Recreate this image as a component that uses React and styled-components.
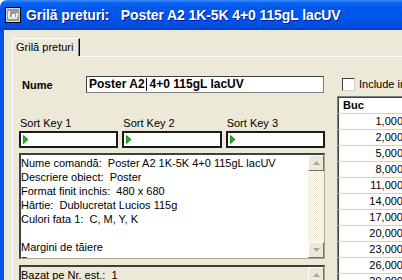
import React from "react";
import styled, { createGlobalStyle } from "styled-components";

const GlobalStyle = createGlobalStyle`
  html, body {
    margin: 0;
    padding: 0;
    background: #ffffff;
    overflow: hidden;
  }
  body {
    font-family: "Liberation Sans", Arial, sans-serif;
    font-size: 11px;
    color: #000;
  }
`;

const memoLines = [
  "Nume comandă:  Poster A2 1K-5K 4+0 115gL lacUV",
  "Descriere obiect:  Poster",
  "Format finit inchis:  480 x 680",
  "Hârtie:  Dublucretat Lucios 115g",
  "Culori fata 1:  C, M, Y, K",
  " ",
  "Margini de tăiere",
  "Presare:",
];

const quantities = [
  "1,000",
  "2,000",
  "5,000",
  "8,000",
  "11,000",
  "14,000",
  "17,000",
  "20,000",
  "23,000",
  "26,000",
  "29,000",
];

function AppIcon() {
  return (
    <svg width="16" height="16" viewBox="0 0 16 16">
      <rect x="0.5" y="0.5" width="15" height="15" fill="#d8d8d8" stroke="#000" />
      <rect x="2" y="2" width="12" height="12" fill="#9a9a9a" />
      <path d="M4 4v7h8" stroke="#fff" strokeWidth="1.6" fill="none" />
      <rect x="7" y="7" width="3" height="3" fill="#fff" />
      <rect x="11" y="6" width="2" height="4" fill="#e8e8e8" />
    </svg>
  );
}

function GreenArrow() {
  return (
    <svg width="6" height="9" viewBox="0 0 6 9">
      <path d="M0.5 0.5L5 4.5L0.5 8.5Z" fill="#16b516" stroke="#0a7a0a" strokeWidth="0.8" />
    </svg>
  );
}

function ScrollArrow({ down }) {
  return (
    <ArrowButton>
      <svg width="7" height="4" viewBox="0 0 7 4">
        <path d={down ? "M0 0H7L3.5 4Z" : "M0 4H7L3.5 0Z"} fill="#aca899" />
      </svg>
    </ArrowButton>
  );
}

export default function App() {
  return (
    <>
      <GlobalStyle />
      <Window>
        <TitleBar>
          <AppIcon />
          <TitleText>{"Grilă preturi:   Poster A2 1K-5K 4+0 115gL lacUV"}</TitleText>
        </TitleBar>
        <Frame>
          <TabStrip>
            <Tab>Grilă preturi</Tab>
            <TabFiller />
          </TabStrip>
          <Panel>
            <LeftColumn>
              <NameRow>
                <NameLabel>Nume</NameLabel>
                <NameInput>
                  Poster A2<Caret />4+0 115gL lacUV
                </NameInput>
              </NameRow>
              <SortKeys>
                {[1, 2, 3].map((n) => (
                  <SortKey key={n}>
                    <SortLabel>Sort Key {n}</SortLabel>
                    <SortBox>
                      <GreenArrow />
                    </SortBox>
                  </SortKey>
                ))}
              </SortKeys>
              <Memo>
                <MemoText>
                  {memoLines.map((line, i) => (
                    <div key={i}>{line}</div>
                  ))}
                </MemoText>
                <ScrollBar>
                  <ScrollArrow />
                  <Track />
                  <ScrollArrow down />
                </ScrollBar>
              </Memo>
              <Memo $readonly $height={40}>
                <MemoText>
                  <div>{"Bazat pe Nr. est.:  1"}</div>
                </MemoText>
                <ScrollBar>
                  <ScrollArrow />
                  <Track />
                </ScrollBar>
              </Memo>
            </LeftColumn>
            <RightColumn>
              <CheckRow>
                <CheckBox />
                <span>Include in calcul</span>
              </CheckRow>
              <Grid>
                <HeaderCell>Buc</HeaderCell>
                {quantities.map((q) => (
                  <Cell key={q}>{q}</Cell>
                ))}
              </Grid>
            </RightColumn>
          </Panel>
        </Frame>
      </Window>
    </>
  );
}

const Window = styled.div`
  width: 440px;
  height: 280px;
  display: flex;
  flex-direction: column;
  border-top-left-radius: 7px;
  overflow: hidden;
  background: #ece9d8;
`;

const TitleBar = styled.div`
  height: 30px;
  flex: none;
  display: flex;
  align-items: center;
  gap: 5px;
  padding: 0 0 1px 5px;
  box-sizing: border-box;
  background: linear-gradient(
    #3a8cff 0%,
    #0a63f0 10%,
    #0058ee 25%,
    #0055ea 60%,
    #004ddf 88%,
    #0040c8 100%
  );
`;

const TitleText = styled.div`
  color: #fff;
  font-family: "Liberation Sans", Arial, sans-serif;
  font-weight: bold;
  font-size: 14px;
  letter-spacing: -0.1px;
  white-space: pre;
  text-shadow: 1px 1px #0a1a8a;
`;

const Frame = styled.div`
  flex: 1;
  display: flex;
  flex-direction: column;
  border-left: 4px solid #0054e6;
  padding-left: 8px;
  background: #ece9d8;
`;

const TabStrip = styled.div`
  display: flex;
  padding-top: 8px;
  height: 19px;
  flex: none;
`;

const Tab = styled.div`
  width: 68px;
  height: 18px;
  border-left: 1px solid #fff;
  border-top: 1px solid #fff;
  border-right: 1px solid #000;
  box-shadow: inset -1px 0 #808080;
  padding-left: 3px;
  box-sizing: border-box;
  line-height: 16px;
`;

const TabFiller = styled.div`
  flex: 1;
  border-bottom: 1px solid #fff;
`;

const Panel = styled.div`
  flex: 1;
  display: flex;
  gap: 12px;
  border-left: 1px solid #fff;
  padding: 19px 0 0 6px;
`;

const LeftColumn = styled.div`
  width: 306px;
  flex: none;
  display: flex;
  flex-direction: column;
`;

const NameRow = styled.div`
  display: flex;
  align-items: center;
  height: 17px;
`;

const NameLabel = styled.div`
  width: 64px;
  padding-left: 3px;
  font-weight: bold;
  font-size: 11px;
`;

const NameInput = styled.div`
  width: 238px;
  height: 17px;
  box-sizing: border-box;
  border: 1px solid #7f7f7f;
  border-top-color: #404040;
  border-left-color: #404040;
  background: #fff;
  font-weight: bold;
  font-size: 12px;
  line-height: 15px;
  padding-left: 2px;
  white-space: pre;
  display: flex;
  align-items: center;
`;

const Caret = styled.span`
  display: inline-block;
  width: 1px;
  height: 13px;
  background: #000;
  margin: 0 3px 0 1px;
`;

const SortKeys = styled.div`
  display: grid;
  grid-template-columns: repeat(3, 1fr);
  column-gap: 4px;
  margin-top: 24px;
`;

const SortKey = styled.div`
  display: flex;
  flex-direction: column;
`;

const SortLabel = styled.div`
  line-height: 13px;
  padding-left: 1px;
  margin-bottom: 1px;
`;

const SortBox = styled.div`
  height: 17px;
  box-sizing: border-box;
  border: 2px solid #1a1a1a;
  background: #fff;
  display: flex;
  align-items: center;
  padding-left: 2px;
`;

const Memo = styled.div`
  margin-top: ${(p) => (p.$readonly ? 6 : 5)}px;
  height: ${(p) => p.$height || 106}px;
  flex: none;
  box-sizing: border-box;
  display: flex;
  border-style: solid;
  border-width: 2px 1px 1px 2px;
  border-color: #404040 #aca899 #aca899 #404040;
  background: ${(p) => (p.$readonly ? "#ece9d8" : "#fff")};
`;

const MemoText = styled.div`
  flex: 1;
  overflow: hidden;
  white-space: pre;
  line-height: 14px;
  padding: 1px 0 0 0;
`;

const ScrollBar = styled.div`
  width: 16px;
  flex: none;
  display: flex;
  flex-direction: column;
`;

const ArrowButton = styled.div`
  width: 16px;
  height: 16px;
  flex: none;
  box-sizing: border-box;
  background: #ece9d8;
  border: 1px solid #fff;
  border-right-color: #716f64;
  border-bottom-color: #716f64;
  display: flex;
  align-items: center;
  justify-content: center;
`;

const Track = styled.div`
  flex: 1;
  background: repeating-conic-gradient(#ece9d8 0 25%, #ffffff 0 50%) 0 0 / 2px 2px;
`;

const RightColumn = styled.div`
  flex: none;
  width: 90px;
  display: flex;
  flex-direction: column;
`;

const CheckRow = styled.div`
  height: 20px;
  display: flex;
  align-items: flex-start;
  gap: 4px;
  padding: 2px 0 0 5px;
  box-sizing: border-box;
  white-space: nowrap;
  line-height: 13px;
`;

const CheckBox = styled.div`
  width: 13px;
  height: 13px;
  flex: none;
  box-sizing: border-box;
  border: 1px solid #404040;
  border-right-color: #d4d0c8;
  border-bottom-color: #d4d0c8;
  background: #fff;
`;

const Grid = styled.div`
  width: 70px;
  flex: 1;
  border-top: 1px solid #808080;
  border-left: 1px solid #808080;
  box-shadow: inset 1px 1px #404040;
  background: #fff;
  display: flex;
  flex-direction: column;
`;

const HeaderCell = styled.div`
  height: 15px;
  flex: none;
  font-weight: bold;
  padding: 1px 0 0 5px;
  line-height: 14px;
  border-bottom: 1px solid #d4d0c8;
`;

const Cell = styled.div`
  height: 15px;
  flex: none;
  text-align: right;
  padding-right: 5px;
  line-height: 15px;
  border-bottom: 1px solid #d4d0c8;
`;
